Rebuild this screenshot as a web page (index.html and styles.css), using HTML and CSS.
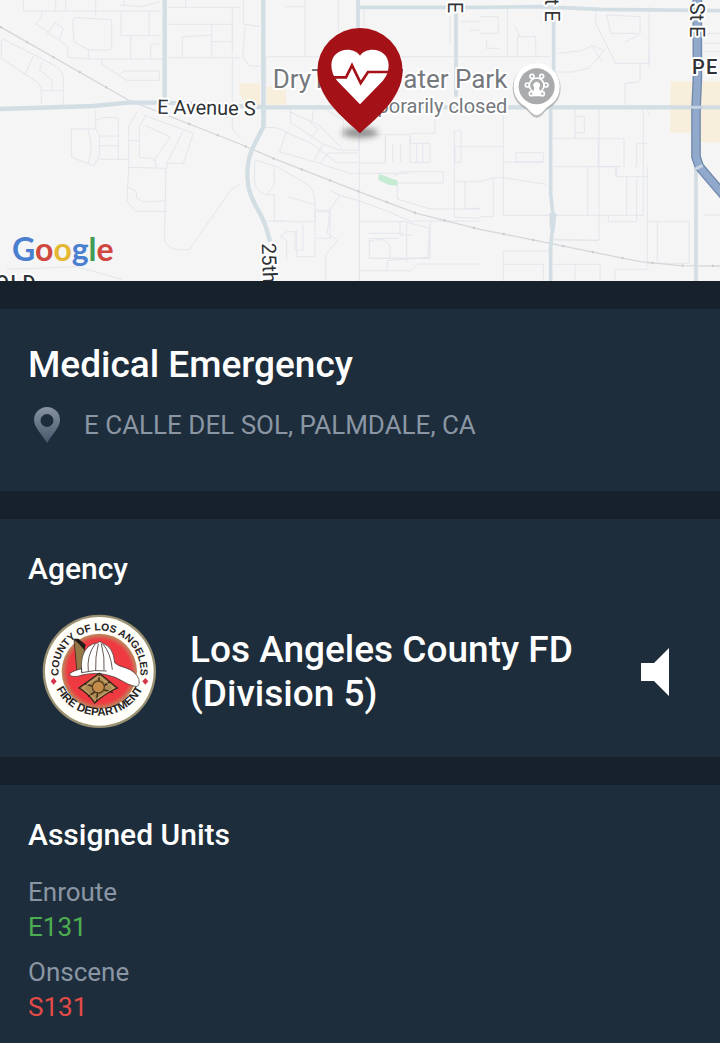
FILE: index.html
```
<!DOCTYPE html>
<html lang="en">
<head>
  <meta charset="UTF-8">
  <meta name="viewport" content="width=device-width, initial-scale=1">
  <title>Medical Emergency</title>
  <link rel="stylesheet" href="styles.css">
</head>
<body>

  <div class="map">
    <svg class="map-canvas" viewBox="0 0 2160 843" preserveAspectRatio="xMidYMid slice" role="img" aria-label="Map of the incident location">
      <defs>
        <filter id="soft" x="-50%" y="-100%" width="200%" height="300%"><feGaussianBlur stdDeviation="9"/></filter>
      </defs>

      <!-- areas -->
      <path class="area" d="M718 250h62v65h-42l-20-35zM800 258l58 10v46h-58zM2012 244h148v184l-60-2v-28h-90z"/>
      <path class="park" d="M1138 522l56 20-2 15-24-2-34-15z"/>

      <!-- local streets -->
      <g class="streets">
        <path d="M70 0v33h415M167 0v33M197 0v30M287 0v45M360 15l65 5 55-15M372 0v15M125 35v15l-18 22 38 24 20-28 25 16-12 35-38-21M178 120l25 20v32l62 5h225M218 65q0-12 12-12l105 6v85q0 6-8 6h-60l-45-25zM265 150v27M363 35v72h120M447 35v72M392 107v68M480 132h-28v43M505 22h215M557 0v22M505 73h192v90M697 22v103h-62M635 75v95M547 172v-62l88-4M505 173h215M697 173v215l23 25"/>
        <path d="M10 118q-6 0-6 20v38l100 65q20 12 20 35v35M10 118l100 50 60 32q20 16 20 40v75M100 168l-25 55M128 185l-10 25 38 30v32M125 272h65M305 178v15l75 48h98v-28H370l-10 10"/>
        <path d="M287 330v57h-73v85l68 25 16-30v-60l-11-20M263 388q20 50 0 105M290 360q30-14 65-4v122M298 408h57M298 437h57M298 478h88M412 335l-26 45v122l114 3v-20M436 350l-18 30v92l35 3 15 10M386 422h32M436 376l74 35-45 65 3 25M430 345l150 55-30 90-50 0 50-98M386 502l-5 100 25 32h94M381 560l28 15v18l20 13 70-4M498 505l-5 215q10 25 40 29h35l125-180 27-17M20 808l210-8 135 38"/>
        <path d="M730 0v72l50 8M735 80l-7 90 20 28h34M915 0v20M915 20h-60M915 20v150M1015 0v170M800 170h640M797 170v210M1092 20v60M1350 50v80M1385 65h55M1410 90h30"/>
        <path d="M790 383q50-5 70 15l70 30 80 60h65M872 328v40l100 65 45 17h60v-50M868 335l85 38 72 70M940 332l-5 40 20 15-25 30M980 330l50 30v52M860 395l-22 60 120 35 90 30h180M970 430l-28 52M962 487l22-28h90M1078 405v440M1078 489h78v-85h70M1156 404v82M1178 430v57M1202 430v57M1230 405v82M1078 404h70M1230 430h60v57h-62M1250 430v57M1268 430v57M1440 440h-75v47h18v-95h-20v260l77 3M1363 545h77M1230 430V400h75V345M1180 530l25-15h125v34H1195M1192 550v47l100 30h150M1395 545v80h45"/>
        <path d="M765 480l-2 60q5 50 60 45v78h40M765 480l65 20 80 45q35 20 35 60v165h-55v-80M823 500v55l-22 27M863 590l50 15 32 10M863 665h82v-30h45v80h-40M800 663h55M860 775v-55l-20-10 20-15 25 0v55h24v-80M990 570l30 15-30 45-8 70 30 20-35 45 0 75M990 630h-45M1015 585l65 18 80 30 70 30h210M1078 600v243M1105 725q25-10 45-5l20 15v40h-62v-60l90 0M1078 665h140l70 20v90h-130M1105 700h105M1105 775h180M1162 812v-30l120-10 10-110M1220 665v120M1200 665v40h40M1078 812h155l20-20h187M1290 670v110"/>
        <path d="M1440 100l55 0V50h-55M1460 120v25h35M1522 25v140M1440 170h210M1552 165v-55h55v55M1560 110l-15-30M1787 20v50l60 120h100V20M1675 160l70-8 32-15 36 15-45 52-50 12h-65M1820 45l100 5v52l-45 25M1820 45l12 55h80M1777 140l30 45M1920 190v55l-45 5v65M1947 150v50"/>
        <path d="M1510 328v318h420v-315M1440 440h70M1548 486v-28h82v28zM1510 486h120M1440 545l40-12h30l130 20M1440 650h40V535M1660 415h135v87M1725 330v85M1728 350l25-2v50h-28M1797 330v390h-135M1797 416h75v85M1660 500h205M1763 500v146M1797 500h50v30h95M1850 500v30M1880 530v115M1910 440v-10h32M1910 435v65l-8 5M1910 535v130h-85v-20M1660 718l135 4M1942 500v300M1942 665h125v125M1972 665v120M1510 843v-90h140M1510 793h120v50M1660 793h140v50M1725 793v50M1845 843v-35h100M1942 790h120M2160 645h-50M2110 155h50M2110 100h50M2110 130h50M1942 330l8 15"/>
      </g>

      <path class="rail" d="M0 80L385 300L720 432L820 475L1090 580L1250 640L1440 688L1650 730L1920 785L2040 797L2160 798"/>
      <path class="rail-ties" d="M0 80L385 300L720 432L820 475L1090 580L1250 640L1440 688L1650 730L1920 785L2040 797L2160 798"/>

      <!-- main roads -->
      <path class="road" d="M0 327L280 318L385 308H500L800 322H2160M494 0V300M790 0V380L760 440Q735 490 745 560Q755 600 780 640Q800 680 810 725"/>
      <path class="road thin" d="M1074 0V180M1074 22H1440L1620 20L1800 28L2160 32M1368 20V290M1661 0V200L1652 330V580L1660 655L1652 740V843M2088 500V843"/>
      <path class="road-dot" d="M1648 640h22l-7 60-14-20z"/>
      <path class="highway edge" d="M2092 0V240L2088 330V470L2098 500L2175 590"/>
      <path class="highway" d="M2092 0V240L2088 330V470L2098 500L2175 590"/>
      <path class="crossing" d="M2072 322h36M2084 508l24-12"/>

      <!-- labels -->
      <g class="label">
        <text x="471" y="341" transform="rotate(1 471 341)">E Avenue S</text>
        <text transform="translate(1344 5) rotate(90)">E</text>
        <text transform="translate(1636 -4) rotate(90)">t E</text>
        <text transform="translate(2070 8) rotate(90)">St E</text>
        <text transform="translate(785 730) rotate(88)">25th</text>
        <text class="town" x="2076" y="223">PE</text>
        <text class="town" x="-14" y="869">OLD</text>
      </g>
      <g class="label place" text-anchor="end">
        <text x="1522" y="263">DryTown Water Park</text>
        <text class="note" x="1522" y="339">Temporarily closed</text>
      </g>

      <!-- attraction marker -->
      <g>
        <path class="marker-shadow" d="M1610 353q-12 0-24-17-8-10-24-19-24-18-24-53a70 70 0 0 1 144 0q0 35-24 53-16 9-24 19-12 17-24 17z"/>
        <path fill="#fff" d="M1610 345q-11 0-23-15-8-10-23-19-23-18-23-52a69 69 0 0 1 138 0q0 34-23 52-15 9-23 19-12 15-23 15z"/>
        <circle cx="1610" cy="259" r="54" fill="#a9abad"/>
        <g fill="none" stroke="#fff" stroke-width="5">
          <circle cx="1610" cy="256" r="22"/>
          <circle cx="1596" cy="229" r="6"/><circle cx="1625" cy="229" r="6"/>
          <circle cx="1582" cy="255" r="6"/><circle cx="1638" cy="255" r="6"/>
          <circle cx="1594" cy="281" r="6"/><circle cx="1627" cy="281" r="6"/>
        </g>
        <path fill="#fff" d="M1610 245a11 11 0 0 1 7 19l8 25h-30l8-25a11 11 0 0 1 7-19z"/>
      </g>

      <!-- incident pin -->
      <g>
        <ellipse cx="1080" cy="398" rx="54" ry="15" fill="#555" opacity=".65" filter="url(#soft)"/>
        <path fill="#a41117" d="M1080 400C1052 370 952 302 952 212A128 128 0 0 1 1208 212C1208 302 1108 370 1080 400z"/>
        <path fill="#fff" d="M1080 313L1012 243Q994 222 994 196C994 145 1058 136 1080 167C1102 136 1166 145 1166 196Q1166 222 1148 243z"/>
        <path fill="none" stroke="#a41117" stroke-width="8" d="M990 232h48l18-36 26 53 22-33h66"/>
      </g>
    </svg>

    <div class="google"><span class="blue">G</span><span class="red">o</span><span class="yellow">o</span><span class="blue">g</span><span class="green">l</span><span class="red">e</span></div>
  </div>

  <section class="card incident">
    <h1>Medical Emergency</h1>
    <div class="address">
      <svg class="pin-icon" viewBox="0 0 26 36" aria-hidden="true">
        <defs>
          <linearGradient id="pin-fill" x1="0" y1="0" x2="0" y2="1">
            <stop offset="0" stop-color="#8793a3"/>
            <stop offset="1" stop-color="#47566a"/>
          </linearGradient>
        </defs>
        <path fill="url(#pin-fill)" fill-rule="evenodd" d="M13 0a13 13 0 0 1 13 13c0 7-7 13-13 23C7 26 0 20 0 13A13 13 0 0 1 13 0zm0 7a6 6 0 1 0 0 13 6 6 0 0 0 0-13z"/>
      </svg>
      <span>E CALLE DEL SOL, PALMDALE, CA</span>
    </div>
  </section>

  <section class="card agency">
    <h2>Agency</h2>
    <div class="agency-row">
      <svg class="seal" viewBox="0 0 345 345" role="img" aria-label="County of Los Angeles Fire Department">
        <defs>
          <path id="arc-top" d="M60 222a123 123 0 1 1 225 0"/>
          <path id="arc-bottom" d="M28 172a145 145 0 0 0 289 0"/>
          <radialGradient id="ring">
            <stop offset=".84" stop-color="#ef3a41"/>
            <stop offset="1" stop-color="#b98d60"/>
          </radialGradient>
        </defs>
        <circle cx="172" cy="172" r="170" fill="#9a9072"/>
        <circle cx="172" cy="172" r="163" fill="#fffef8"/>
        <circle cx="172" cy="172" r="113" fill="url(#ring)"/>
        <g class="seal-text" text-anchor="middle">
          <text><textPath href="#arc-top" startOffset="50%">COUNTY OF LOS ANGELES</textPath></text>
          <text class="lower"><textPath href="#arc-bottom" startOffset="50%">FIRE DEPARTMENT</textPath></text>
        </g>
        <path fill="#d5344b" d="M35 192l9 10-9 10-9-10zM310 192l9 10-9 10-9-10z"/>
        <!-- helmet -->
        <path fill="#967746" stroke="#221d18" stroke-width="2" d="M96 77l24 8 8 20-5 70h-18z"/>
        <path fill="#1e1a18" d="M94 74l15 0 22 18-4 16-16-18z"/>
        <path fill="#fff" stroke="#302a28" stroke-width="2" d="M119 176q-6-55 20-78 12-10 27-11 7-8 14 0 34 10 38 59 10 10 31 15 33 10 42 36 4 26-16 19-17-4-34-15-20-13-48-19-32-8-73 1-25 10-38-1 2-9 37-18z"/>
        <path fill="none" stroke="#655b56" stroke-width="3" d="M160 89q-27 35-21 85M169 89q-10 40-8 82M178 89q11 40 8 80M182 89q25 29 29 78M119 176q40-10 75-5"/>
        <!-- badge -->
        <path fill="#aa8952" stroke="#302318" stroke-width="4" d="M172 178l54 44q-38 17-68 45-19-29-47-45z"/>
        <path fill="none" stroke="#302318" stroke-width="4" d="M127 209l86 27M205 203l-67 44M172 183l-8 79"/>
        <path fill="none" stroke="#d1ad72" stroke-width="3" d="M122 222l49-35 44 35-55 35z"/>
        <circle cx="169" cy="219" r="18" fill="#c38b49" stroke="#59421f" stroke-width="4"/>
      </svg>
      <p class="agency-name">Los Angeles County FD (Division 5)</p>
      <button class="speaker" type="button" aria-label="Listen">
        <svg viewBox="0 0 28 48" aria-hidden="true"><path fill="#fff" d="M0 15h13L28 0v48L13 33H0z"/></svg>
      </button>
    </div>
  </section>

  <section class="card units">
    <h2>Assigned Units</h2>
    <dl>
      <dt>Enroute</dt>
      <dd class="enroute">E131</dd>
      <dt>Onscene</dt>
      <dd class="onscene">S131</dd>
    </dl>
  </section>

</body>
</html>
```
FILE: styles.css
```
body {
  margin: 0;
  background-color: #16212c;
  color: #fff;
  font-family: Roboto, sans-serif;
}

h1, h2, p, dl, dd {
  margin: 0;
  font-weight: 500;
}

.map {
  position: relative;
  margin-bottom: 28px;
  background-color: #f5f5f6;
}

.map-canvas {
  display: block;
  width: 100%;
}

.streets {
  fill: none;
  stroke: #e3e6ec;
  stroke-width: 3;
}

.area {
  fill: #f7efdc;
}

.park {
  fill: #c5ecd2;
}

.rail {
  fill: none;
  stroke: #d6d7da;
  stroke-width: 4;
}

.rail-ties {
  fill: none;
  stroke: #cbccd0;
  stroke-width: 7;
  stroke-dasharray: 6 85;
}

.road {
  fill: none;
  stroke: #d3dde4;
  stroke-width: 13;
}

.road.thin {
  stroke-width: 11;
}

.road-dot {
  fill: #d3dde4;
}

.highway {
  fill: none;
  stroke: #91a9cb;
  stroke-width: 21;
}

.highway.edge {
  stroke: #7189ab;
  stroke-width: 29;
}

.crossing {
  stroke: #c6d4e2;
  stroke-width: 9;
}

.label {
  fill: #303236;
  stroke: #fff;
  stroke-width: 12;
  stroke-linejoin: round;
  paint-order: stroke;
  font-size: 60px;
}

.label .town {
  font-weight: 500;
  letter-spacing: 4px;
}

.label.place {
  fill: #75797d;
  font-size: 78px;
}

.label .note {
  font-size: 60px;
}

.marker-shadow {
  fill: #999;
  opacity: 0.6;
}

.google {
  position: absolute;
  left: 12px;
  bottom: 10px;
  font-family: Lato, sans-serif;
  font-size: 32px;
  font-weight: 700;
  line-height: 44px;
}

.blue { color: #4a7fd0; }
.red { color: #cf4840; }
.yellow { color: #e6b832; }
.green { color: #3f9b55; }

.card {
  padding: 28px;
  margin-bottom: 28px;
  background-color: #1e2d3b;
}

.incident {
  padding-bottom: 46px;
}

h1 {
  padding-top: 4px;
  font-size: 37px;
  line-height: 48px;
}

.address {
  display: flex;
  align-items: center;
  gap: 24px;
  padding: 16px 6px 0;
  color: #8a96a4;
  font-size: 26px;
  line-height: 40px;
}

.pin-icon {
  flex: none;
  width: 26px;
  height: 36px;
}

h2 {
  font-size: 30px;
  line-height: 44px;
}

.agency-row {
  display: flex;
  align-items: center;
  padding: 23px 23px 0 14px;
}

.seal {
  flex: none;
  width: 115px;
  height: 115px;
}

.seal-text {
  font-family: "Liberation Sans", sans-serif;
  font-size: 31px;
  font-weight: bold;
  fill: #26221f;
}

.seal-text .lower {
  font-size: 34px;
}

.agency-name {
  flex: 1;
  padding: 0 33px;
  font-size: 37px;
  line-height: 44px;
}

.speaker {
  width: 28px;
  padding: 0;
  border: 0;
  background: none;
  cursor: pointer;
}

.speaker svg {
  display: block;
  width: 100%;
}

.units {
  margin-bottom: 0;
  padding-bottom: 20px;
}

dl {
  padding-top: 18px;
  font-size: 26px;
  line-height: 35px;
}

dt {
  color: #8a96a4;
  font-weight: 400;
}

dd {
  margin-bottom: 10px;
  font-weight: 400;
}

dd:last-child {
  margin-bottom: 0;
}

.enroute { color: #4cae50; }
.onscene { color: #e34b48; }
```
